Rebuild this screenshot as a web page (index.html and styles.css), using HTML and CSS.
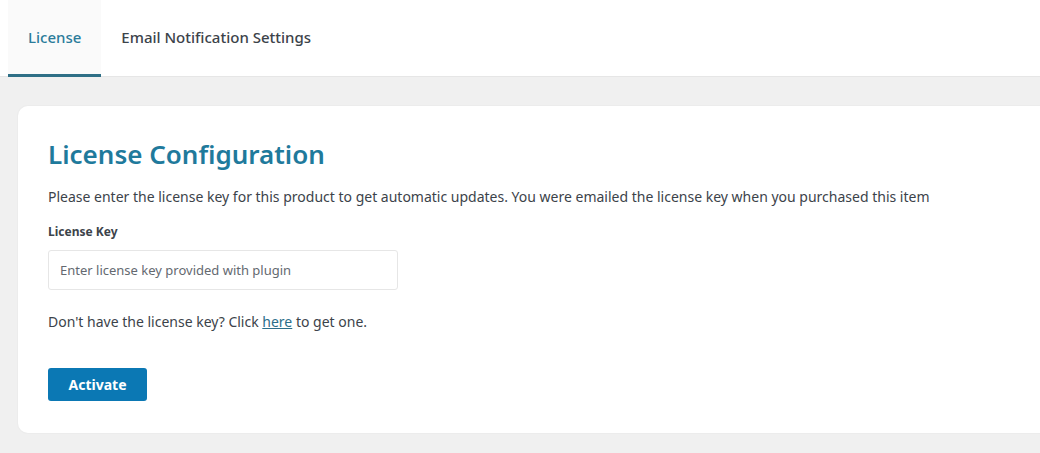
FILE: index.html
```html
<!DOCTYPE html>
<html lang="en">
<head>
    <meta charset="UTF-8">
    <meta name="viewport" content="width=device-width, initial-scale=1.0">
    <title>License</title>
    <link rel="stylesheet" href="styles.css">
</head>
<body>

    <!-- Settings tabs -->
    <div class="tabs">
        <a href="#" class="tab active">License</a>
        <a href="#" class="tab">Email Notification Settings</a>
    </div>

    <!-- License panel -->
    <div class="page">
        <div class="card">
            <h1>License Configuration</h1>
            <p class="intro">Please enter the license key for this product to get automatic updates. You were emailed the license key when you purchased this item</p>

            <label class="field-label" for="licenseKey">License Key</label>
            <input type="text" id="licenseKey" class="field-input" placeholder="Enter license key provided with plugin">

            <p class="hint">Don't have the license key? Click <a href="#">here</a> to get one.</p>

            <button class="btn-primary">Activate</button>
        </div>
    </div>

</body>
</html>
```

FILE: styles.css
```css
/* General styles */
body {
    font-family: "Noto Sans", "Open Sans", sans-serif;
    margin: 0;
    padding: 0;
    background-color: #f0f0f0;
    color: #3c434a;
    overflow: hidden;
}

/* Tabs */
.tabs {
    display: flex;
    background-color: #fff;
    padding-left: 8px;
    height: 77px;
    box-sizing: border-box;
    border-bottom: 1px solid #e6e6e6;
}

.tab {
    display: flex;
    align-items: center;
    padding: 0 20px;
    font-size: 15px;
    font-weight: 500;
    color: #3c434a;
    text-decoration: none;
    border-bottom: 3px solid transparent;
    margin-bottom: -1px;
}

.tab.active {
    color: #2b7c9a;
    background-color: #fafafa;
    border-bottom-color: #2e6f86;
}

/* Panel */
.page {
    padding: 29px 0 20px 18px;
}

.card {
    background-color: #fff;
    border-radius: 10px;
    margin-right: -40px;
    padding: 30px 30px 32px 30px;
    box-shadow: 0 0 0 1px #ececec;
}

.card h1 {
    margin: 0 0 15px;
    font-size: 26px;
    font-weight: 600;
    color: #1f7a9c;
}

.intro {
    margin: 0 0 17px;
    font-size: 14px;
}

.field-label {
    display: block;
    font-size: 12px;
    font-weight: 700;
    margin-bottom: 10px;
}

.field-input {
    display: block;
    width: 350px;
    height: 40px;
    box-sizing: border-box;
    padding: 0 11px;
    border: 1px solid #e6e6e6;
    border-radius: 3px;
    font-family: inherit;
    font-size: 13px;
    color: #3c434a;
    outline: none;
}

.field-input::placeholder {
    color: #646970;
}

.hint {
    margin: 22px 0 37px;
    font-size: 14px;
}

.hint a {
    color: #2b6e8a;
}

.btn-primary {
    display: block;
    width: 99px;
    height: 33px;
    background-color: #0b78b4;
    color: #fff;
    border: none;
    border-radius: 3px;
    font-family: inherit;
    font-size: 14px;
    font-weight: 700;
    cursor: pointer;
}
```
